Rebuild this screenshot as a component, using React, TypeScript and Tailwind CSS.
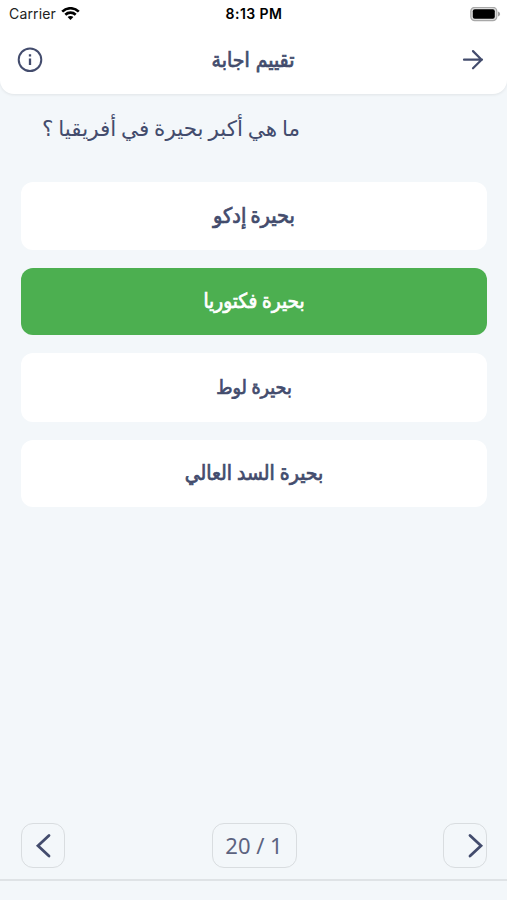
import React, { useState } from 'react';
import clsx from 'clsx';

const ANSWERS = [
  { id: 1, text: 'بحيرة إدكو', height: 'h-[68px]', size: 'text-[21.5px] [word-spacing:-2px]' },
  { id: 2, text: 'بحيرة فكتوريا', height: 'h-[67px]', size: 'text-[20.5px] [word-spacing:-1px]' },
  { id: 3, text: 'بحيرة لوط', height: 'h-[69px]', size: 'text-[19.5px] [word-spacing:-1px]' },
  { id: 4, text: 'بحيرة السد العالي', height: 'h-[67px]', size: 'text-[21px] [word-spacing:-1px]' },
];

function StatusBar() {
  return (
    <div className="flex h-7 items-center justify-between pl-[9px] pr-[6px] text-black">
      <div className="flex w-[100px] items-center gap-[5px]">
        <span className="font-['Inter',sans-serif] text-[14px] leading-none tracking-[0.15px] text-[#222]">Carrier</span>
        <svg width="19" height="14" viewBox="0 0 19 14" fill="none" stroke="currentColor" strokeWidth="2.6">
          <path d="M1.2 4.6C5.8 .1 13.2 .1 17.8 4.6" />
          <path d="M4.3 7.7C7.2 4.9 11.8 4.9 14.7 7.7" />
          <path d="M9.5 12.9 6.6 10C8.2 8.5 10.8 8.5 12.4 10Z" fill="currentColor" stroke="none" />
        </svg>
      </div>
      <span className="pr-[2px] font-['Inter',sans-serif] text-[14px] font-semibold leading-none tracking-[0.45px]">8:13 PM</span>
      <div className="flex w-[100px] justify-end">
        <svg width="31" height="15" viewBox="0 0 31 15">
          <rect x="0.8" y="0.3" width="26" height="13.4" rx="4" fill="#dcdcdc" stroke="#a8a8a8" strokeWidth="1.2" />
          <rect x="2.8" y="2.3" width="22" height="9.4" rx="2" fill="#000" />
          <path d="M28 4.5v5c2.8-1 2.8-4 0-5z" fill="#a0a0a0" />
        </svg>
      </div>
    </div>
  );
}

export default function AnswerReviewPage() {
  const [selected, setSelected] = useState(2);

  return (
    <div className="flex h-[900px] w-[507px] flex-col overflow-hidden bg-[#f3f7fa] font-['DejaVu_Sans',sans-serif] text-[#434c6d]">
      {/* Header */}
      <header className="h-[94px] shrink-0 rounded-b-[14px] bg-white shadow-[0_1px_3px_rgba(0,0,0,0.08)]">
        <StatusBar />
        <div className="flex h-[63px] items-center justify-between pl-[17px] pr-[23px]">
          <button>
            <svg width="26" height="26" viewBox="0 0 26 26" fill="none" stroke="currentColor" strokeWidth="2">
              <circle cx="13" cy="12.7" r="11.3" />
              <path d="M13 11.6V18.1M13 7.3V9.4" strokeWidth="2.3" />
            </svg>
          </button>
          <h1 dir="rtl" className="pl-[1px] pt-[1px] font-['DejaVu_Sans_Condensed','DejaVu_Sans',sans-serif] text-[21px] leading-none [-webkit-text-stroke:0.7px_currentColor]">تقييم اجابة</h1>
          <button>
            <svg width="22" height="22" viewBox="0 0 22 22" fill="none" stroke="currentColor" strokeWidth="2.2" strokeLinecap="round" strokeLinejoin="round">
              <path d="M2 10.7H20M11 2.1 19.6 10.7 11 19.3" />
            </svg>
          </button>
        </div>
      </header>

      {/* Question */}
      <div dir="rtl" className="flex h-[88px] shrink-0 items-start pr-[207px] pt-[22px]">
        <p className="whitespace-nowrap text-[21.5px] leading-[26px] [word-spacing:-2px]">ما هي أكبر بحيرة في أفريقيا ؟</p>
      </div>

      {/* Answers */}
      <div className="flex flex-col gap-[18px] pl-[21px] pr-[20px]">
        {ANSWERS.map((answer) => (
          <button
            key={answer.id}
            dir="rtl"
            onClick={() => setSelected(answer.id)}
            className={clsx(
              "flex items-center justify-center rounded-[12px] font-['DejaVu_Sans_Condensed','DejaVu_Sans',sans-serif] leading-none [-webkit-text-stroke:0.7px_currentColor]",
              answer.height,
              answer.size,
              selected === answer.id ? 'bg-[#4caf50] text-white' : 'bg-white'
            )}
          >
            <span>{answer.text}</span>
          </button>
        ))}
      </div>

      {/* Pager */}
      <div className="mt-auto flex h-[58px] shrink-0 items-start justify-between border-b-2 border-[#dfe3e6] pl-[21px] pr-[20px]">
        <button className="flex h-[45px] w-[44px] items-center justify-center rounded-[12px] border border-[#d9dde0]">
          <svg width="16" height="26" viewBox="0 0 16 26" fill="none" stroke="currentColor" strokeWidth="2.8" strokeLinecap="round">
            <path d="M14 2.5 3 12.8 14 23.1" />
          </svg>
        </button>
        <div className="flex h-[45px] w-[85px] items-center justify-center rounded-[12px] border border-[#d9dde0] pb-[2px] font-['Noto_Sans',sans-serif] text-[22px] leading-none text-[#5c6380]">
          20 / 1
        </div>
        <button className="flex h-[45px] w-[44px] items-center justify-end rounded-[12px] border border-[#d9dde0] pr-[2px]">
          <svg width="16" height="26" viewBox="0 0 16 26" fill="none" stroke="currentColor" strokeWidth="2.8" strokeLinecap="round">
            <path d="M2 2.5 13 12.8 2 23.1" />
          </svg>
        </button>
      </div>
      <div className="h-[19px] shrink-0" />
    </div>
  );
}
